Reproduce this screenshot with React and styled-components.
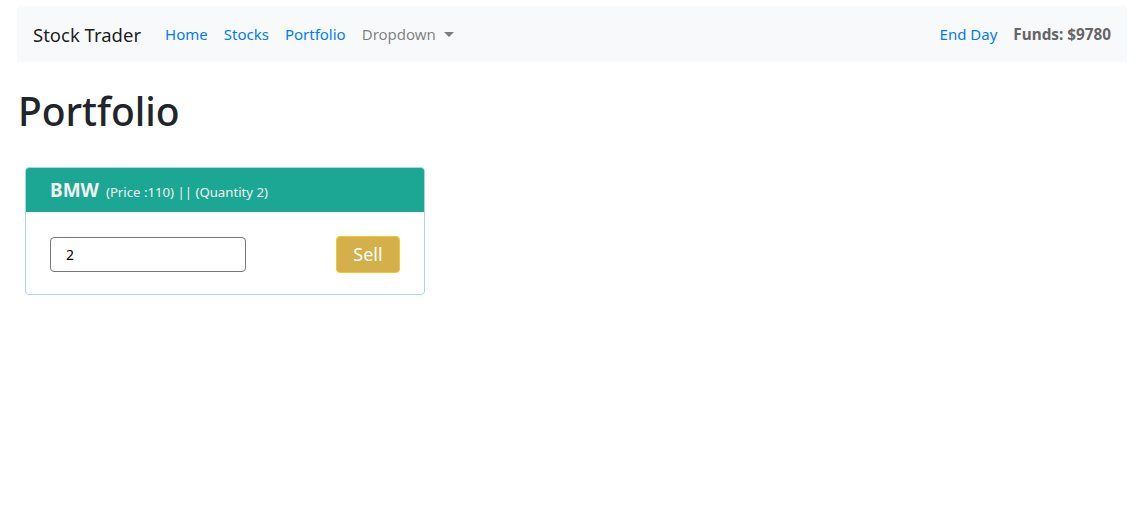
import React, { useState } from "react";
import styled, { createGlobalStyle } from "styled-components";

const GlobalStyle = createGlobalStyle`
  body {
    margin: 0;
    font-family: "Noto Sans", "Open Sans", sans-serif;
    color: #212529;
    background: #fff;
  }
  * { box-sizing: border-box; }
`;

const Page = styled.div`
  padding: 6px 19px 0 17px;
`;

const Navbar = styled.nav`
  display: flex;
  align-items: center;
  height: 56px;
  padding: 0 16px;
  background: #f8f9fa;
`;

const Brand = styled.span`
  font-size: 18.5px;
  color: rgba(0, 0, 0, 0.9);
  margin-right: 24px;
`;

const NavList = styled.div`
  display: flex;
  align-items: center;
  gap: 16px;
  font-size: 15px;
`;

const NavLink = styled.a`
  color: ${(p) => (p.$muted ? "rgba(0,0,0,0.5)" : "#007bff")};
  text-decoration: none;
  display: flex;
  align-items: center;
`;

const Caret = styled.span`
  display: inline-block;
  margin-left: 8px;
  border-top: 5px solid rgba(0, 0, 0, 0.5);
  border-left: 5px solid transparent;
  border-right: 5px solid transparent;
`;

const Right = styled.div`
  margin-left: auto;
  display: flex;
  align-items: center;
  gap: 16px;
  font-size: 15px;
`;

const Funds = styled.strong`
  color: #666;
  font-size: 15.3px;
`;

const Title = styled.h1`
  font-size: 39px;
  font-weight: 500;
  margin: 26px 0 32px 1px;
  line-height: 1.2;
`;

const Card = styled.div`
  width: 400px;
  margin-left: 8px;
  border: 1px solid #a9d8e3;
  border-radius: 4px;
  overflow: hidden;
`;

const CardHeader = styled.div`
  background: #1ca794;
  color: #f0f0f0;
  height: 44px;
  padding: 10px 24px 0;
  display: flex;
  align-items: baseline;
  gap: 7px;
`;

const Name = styled.span`
  font-size: 19px;
  line-height: 24px;
  font-weight: 700;
`;

const Info = styled.small`
  font-size: 13.2px;
`;

const CardBody = styled.div`
  display: flex;
  align-items: center;
  justify-content: space-between;
  padding: 24px 24px 21px 24px;
`;

const Input = styled.input`
  width: 196px;
  height: 35px;
  border: 1px solid #777;
  border-radius: 4px;
  padding: 0 15px;
  font-family: inherit;
  font-size: 14px;
  color: #000;
`;

const SellButton = styled.button`
  width: 64px;
  height: 37px;
  background: #d4af4a;
  border: 1px solid #f5c82a;
  border-radius: 4px;
  color: #fff;
  font-family: inherit;
  font-size: 18px;
`;

export default function App() {
  const [qty, setQty] = useState("2");
  return (
    <Page>
      <GlobalStyle />
      <Navbar>
        <Brand>Stock Trader</Brand>
        <NavList>
          <NavLink>Home</NavLink>
          <NavLink>Stocks</NavLink>
          <NavLink>Portfolio</NavLink>
          <NavLink $muted>
            Dropdown
            <Caret />
          </NavLink>
        </NavList>
        <Right>
          <NavLink>End Day</NavLink>
          <Funds>Funds: $9780</Funds>
        </Right>
      </Navbar>
      <Title>Portfolio</Title>
      <Card>
        <CardHeader>
          <Name>BMW</Name>
          <Info>(Price :110) || (Quantity 2)</Info>
        </CardHeader>
        <CardBody>
          <Input value={qty} onChange={(e) => setQty(e.target.value)} />
          <SellButton>Sell</SellButton>
        </CardBody>
      </Card>
    </Page>
  );
}
